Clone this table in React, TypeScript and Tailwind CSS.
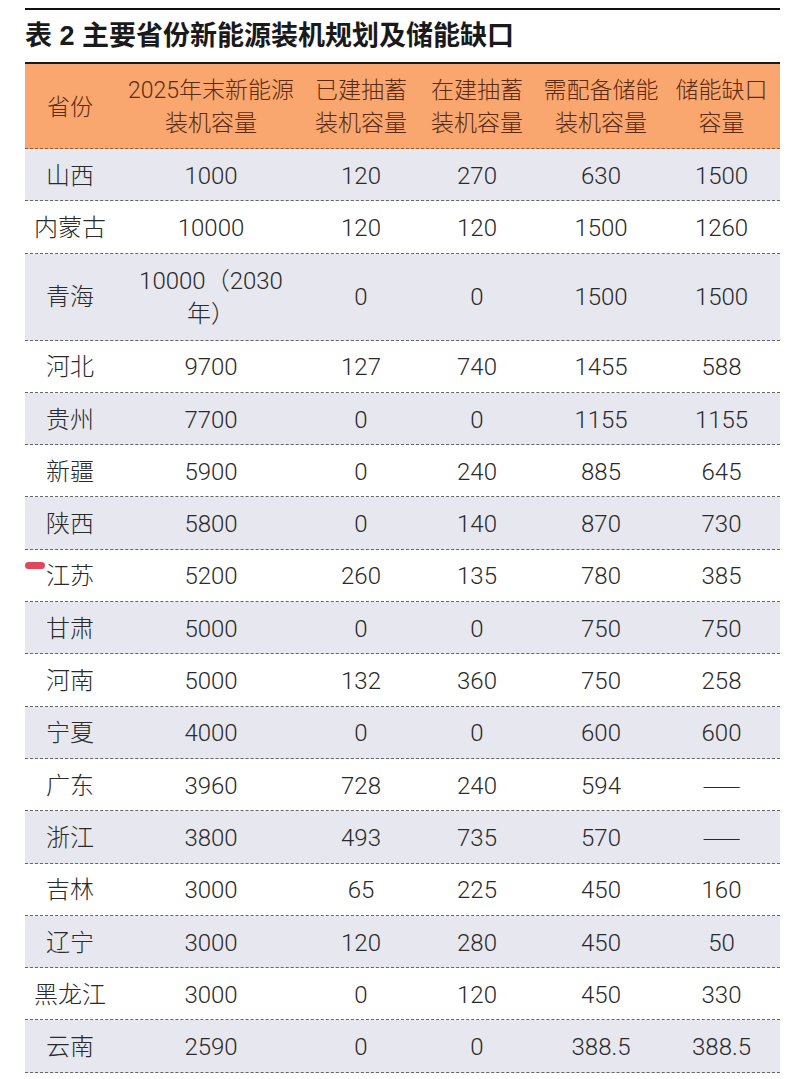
import React from "react";

type Row = { p: string; a: React.ReactNode; b: string; c: string; d: string; e: React.ReactNode; tall?: boolean };

const Dash = () => (
  <span style={{ fontFamily: '"Noto Sans CJK SC", sans-serif' }} className="text-[23px]">
    ——
  </span>
);

const rows: Row[] = [
  { p: "山西", a: "1000", b: "120", c: "270", d: "630", e: "1500" },
  { p: "内蒙古", a: "10000", b: "120", c: "120", d: "1500", e: "1260" },
  { p: "青海", a: <>10000（2030<br />年）</>, b: "0", c: "0", d: "1500", e: "1500", tall: true },
  { p: "河北", a: "9700", b: "127", c: "740", d: "1455", e: "588" },
  { p: "贵州", a: "7700", b: "0", c: "0", d: "1155", e: "1155" },
  { p: "新疆", a: "5900", b: "0", c: "240", d: "885", e: "645" },
  { p: "陕西", a: "5800", b: "0", c: "140", d: "870", e: "730" },
  { p: "江苏", a: "5200", b: "260", c: "135", d: "780", e: "385" },
  { p: "甘肃", a: "5000", b: "0", c: "0", d: "750", e: "750" },
  { p: "河南", a: "5000", b: "132", c: "360", d: "750", e: "258" },
  { p: "宁夏", a: "4000", b: "0", c: "0", d: "600", e: "600" },
  { p: "广东", a: "3960", b: "728", c: "240", d: "594", e: <Dash /> },
  { p: "浙江", a: "3800", b: "493", c: "735", d: "570", e: <Dash /> },
  { p: "吉林", a: "3000", b: "65", c: "225", d: "450", e: "160" },
  { p: "辽宁", a: "3000", b: "120", c: "280", d: "450", e: "50" },
  { p: "黑龙江", a: "3000", b: "0", c: "120", d: "450", e: "330" },
  { p: "云南", a: "2590", b: "0", c: "0", d: "388.5", e: "388.5" },
];

const grid = "grid grid-cols-[90px_192px_108px_124px_124px_117px]";
const titleFont = { fontFamily: '"Liberation Sans", "Noto Sans CJK SC", sans-serif' };
const bodyFont = { fontFamily: 'Roboto, "Noto Sans CJK SC", sans-serif' };

export default function App() {
  return (
    <div className="w-[800px] h-[1079px] bg-white relative overflow-hidden" style={titleFont}>
      <div className="ml-[25px] w-[755px] pt-[8px]">
        <div className="h-[2px] bg-[#111]" />
        <div className="h-[52px] flex items-center">
          <h1 className="text-[27px] font-bold text-[#1a1a1a] leading-none">
            表 2 主要省份新能源装机规划及储能缺口
          </h1>
        </div>
        <div className="h-[2px] bg-[#1a1a1a]" />
        <div style={bodyFont}>
          <div className={`${grid} h-[85px] bg-[#f9a76e] text-[#5a2a12] text-[23px] font-light leading-[33px] border-b border-dashed border-[#8a5a40] items-center text-center pt-[2px]`}>
            <div>省份</div>
            <div>2025年末新能源<br />装机容量</div>
            <div>已建抽蓄<br />装机容量</div>
            <div>在建抽蓄<br />装机容量</div>
            <div>需配备储能<br />装机容量</div>
            <div>储能缺口<br />容量</div>
          </div>
          {rows.map((r, i) => (
            <div
              key={r.p}
              className={`${grid} ${r.tall ? "h-[87px] leading-[33px]" : "h-[52.3px]"} ${i % 2 === 0 ? "bg-[#e7e7ef]" : "bg-white"} border-b border-dashed border-[#666] items-center text-center text-[#2a2a2a] text-[24px] font-light pt-[2px]`}
            >
              <div>{r.p}</div>
              <div>{r.a}</div>
              <div>{r.b}</div>
              <div>{r.c}</div>
              <div>{r.d}</div>
              <div>{r.e}</div>
            </div>
          ))}
        </div>
      </div>
      <div className="absolute left-[25px] top-[562px] w-[20px] h-[7px] rounded-full bg-[#e0475a]" />
    </div>
  );
}
